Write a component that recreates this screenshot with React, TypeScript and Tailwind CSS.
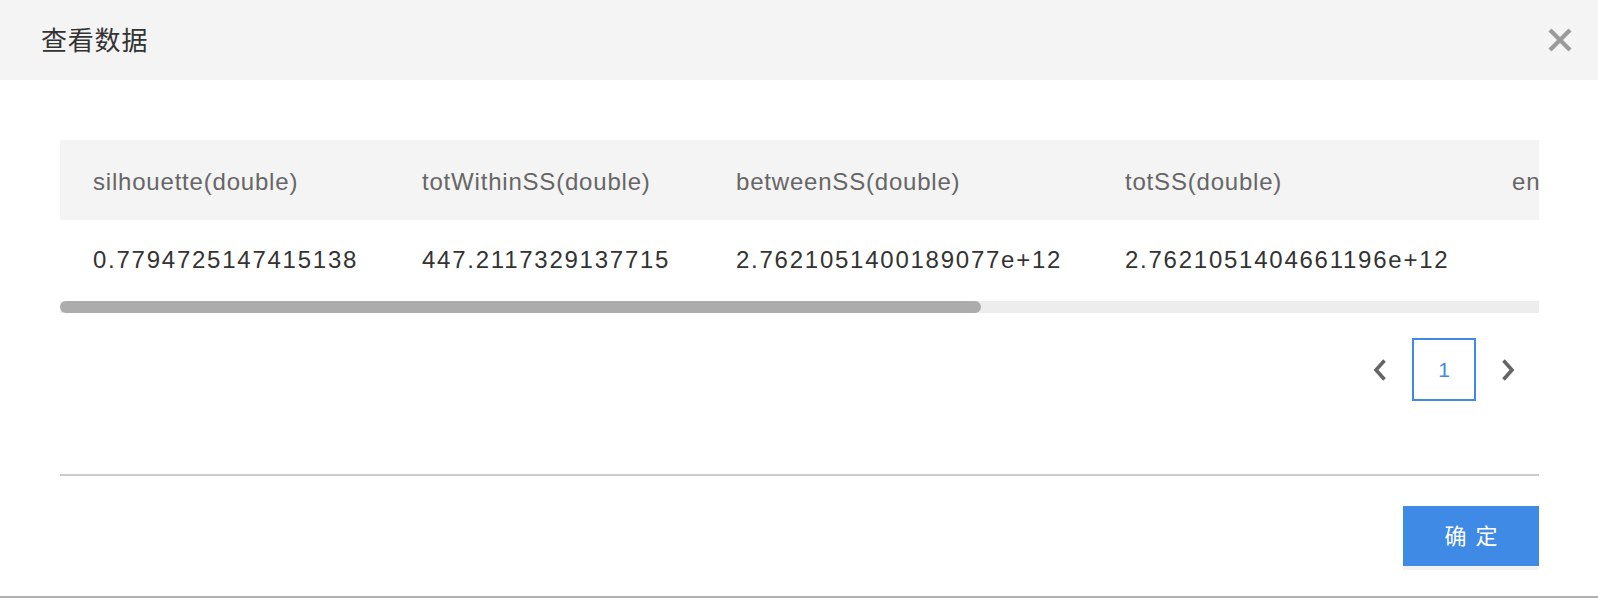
const columns = [
	{ name: "silhouette(double)", value: "0.7794725147415138", width: "w-[329px]" },
	{ name: "totWithinSS(double)", value: "447.2117329137715", width: "w-[314px]" },
	{ name: "betweenSS(double)", value: "2.7621051400189077e+12", width: "w-[389px]" },
	{ name: "totSS(double)", value: "2.7621051404661196e+12", width: "w-[387px]" },
	{ name: "entropy(double)", value: "", width: "w-[260px]" },
];

const Chevron = ({ dir }: { dir: "left" | "right" }) => (
	<svg width="16" height="24" viewBox="0 0 16 24" fill="none" stroke="currentColor" strokeWidth="3.6" strokeLinejoin="miter">
		{dir === "left" ? <path d="M12.5 2.5L4 12L12.5 21.5" /> : <path d="M3.5 2.5L12 12L3.5 21.5" />}
	</svg>
);

const App = () => {
	return (
		<div
			className="w-[1598px] h-[598px] bg-white flex flex-col overflow-hidden"
			style={{ fontFamily: '"Liberation Sans", "Noto Sans CJK SC", sans-serif' }}
		>
			{/* Modal header */}
			<div className="h-[80px] shrink-0 bg-[#f4f4f4] flex items-center justify-between pl-[41px] pr-[26px]">
				<h2 className="text-[26px] tracking-[0.8px] text-[#333] leading-none pt-[1px]">查看数据</h2>
				<button type="button" className="w-[24px] h-[24px] text-[#9b9b9b]" aria-label="关闭">
					<svg viewBox="0 0 24 24" className="w-[24px] h-[24px]" fill="none" stroke="currentColor" strokeWidth="4.2">
						<path d="M2 2L22 22" />
						<path d="M22 2L2 22" />
					</svg>
				</button>
			</div>

			<div className="flex-1 flex flex-col pt-[60px] pl-[60px] pr-[59px]">
				{/* Table */}
				<div className="w-full overflow-hidden">
					<div className="flex h-[80px] bg-[#f4f4f4] w-max min-w-full">
						{columns.map((c) => (
							<div
								key={c.name}
								className={`${c.width} shrink-0 pl-[33px] flex items-center text-[24px] tracking-[0.8px] text-[#666] whitespace-nowrap pt-[3px]`}
							>
								{c.name}
							</div>
						))}
					</div>
					<div className="flex h-[81px] w-max">
						{columns.map((c) => (
							<div
								key={c.name}
								className={`${c.width} shrink-0 pl-[33px] flex items-center text-[24px] tracking-[1.75px] text-[#333] whitespace-nowrap pb-[2px]`}
							>
								{c.value}
							</div>
						))}
					</div>
				</div>
				{/* Scrollbar */}
				<div className="h-[12px] bg-[#ededed] w-full">
					<div className="h-[12px] w-[921px] rounded-full bg-[#acacac]" />
				</div>

				{/* Pagination */}
				<div className="mt-[25px] flex justify-end items-center pr-[7px]">
					<button type="button" className="w-[48px] h-[63px] flex items-center justify-center text-[#666]">
						<Chevron dir="left" />
					</button>
					<div className="ml-[8px] w-[64px] h-[63px] border-2 border-[#3f8ae5] flex items-center justify-center text-[21px] text-[#3f8ae5]">
						1
					</div>
					<button type="button" className="ml-[8px] w-[48px] h-[63px] flex items-center justify-center text-[#666]">
						<Chevron dir="right" />
					</button>
				</div>

				{/* Footer */}
				<div className="mt-[73px] h-[2px] bg-[#cccccc]" />
				<div className="mt-[30px] flex justify-end">
					<button
						type="button"
						className="w-[136px] h-[60px] bg-[#3f8ae5] text-white text-[22px] tracking-[9px] pl-[9px] shadow-[0_4px_0_#f2f2f2]"
					>
						确定
					</button>
				</div>
			</div>
			<div className="h-[2px] shrink-0 bg-[#b0b0b0]" />
		</div>
	);
};

export default App;
